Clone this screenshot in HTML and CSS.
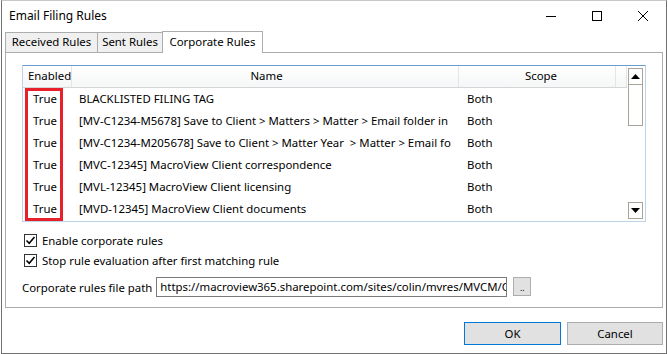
FILE: index.html
```html
<!DOCTYPE html>
<html lang="en">
<head>
    <meta charset="UTF-8">
    <title>Email Filing Rules</title>
    <link rel="stylesheet" href="styles.css">
</head>
<body>

    <div class="window">
        <!-- Title bar -->
        <div class="titlebar">
            <span class="title">Email Filing Rules</span>
            <div class="caption-buttons">
                <span class="cap-btn">
                    <svg width="10" height="10" viewBox="0 0 10 10"><path d="M0 5.5h10" stroke="#000" stroke-width="1"/></svg>
                </span>
                <span class="cap-btn">
                    <svg width="10" height="10" viewBox="0 0 10 10"><rect x="0.5" y="0.5" width="9" height="9" fill="none" stroke="#000" stroke-width="1"/></svg>
                </span>
                <span class="cap-btn">
                    <svg width="10" height="10" viewBox="0 0 10 10"><path d="M0 0L10 10M10 0L0 10" stroke="#000" stroke-width="1"/></svg>
                </span>
            </div>
        </div>

        <!-- Tabs -->
        <div class="tabs">
            <span class="tab tab-received">Received Rules</span>
            <span class="tab tab-sent">Sent Rules</span>
            <span class="tab active">Corporate Rules</span>
        </div>

        <div class="tab-panel">
            <div class="list">
                <div class="grid">
                    <div class="row header">
                        <span class="col-enabled">Enabled</span>
                        <span class="col-name">Name</span>
                        <span class="col-scope">Scope</span>
                        <span class="col-fill"></span>
                    </div>
                    <div class="row">
                        <span class="col-enabled">True</span>
                        <span class="col-name">BLACKLISTED FILING TAG</span>
                        <span class="col-scope">Both</span>
                    </div>
                    <div class="row">
                        <span class="col-enabled">True</span>
                        <span class="col-name">[MV-C1234-M5678] Save to Client &gt; Matters &gt; Matter &gt; Email folder in</span>
                        <span class="col-scope">Both</span>
                    </div>
                    <div class="row">
                        <span class="col-enabled">True</span>
                        <span class="col-name">[MV-C1234-M205678] Save to Client &gt; Matter Year &nbsp;&gt; Matter &gt; Email fo</span>
                        <span class="col-scope">Both</span>
                    </div>
                    <div class="row">
                        <span class="col-enabled">True</span>
                        <span class="col-name">[MVC-12345] MacroView Client correspondence</span>
                        <span class="col-scope">Both</span>
                    </div>
                    <div class="row">
                        <span class="col-enabled">True</span>
                        <span class="col-name">[MVL-12345] MacroView Client licensing</span>
                        <span class="col-scope">Both</span>
                    </div>
                    <div class="row">
                        <span class="col-enabled">True</span>
                        <span class="col-name">[MVD-12345] MacroView Client documents</span>
                        <span class="col-scope">Both</span>
                    </div>
                    <!-- highlight round the Enabled column -->
                    <div class="highlight"></div>
                </div>
                <div class="vscroll">
                    <span class="arrow">
                        <svg width="9" height="5" viewBox="0 0 9 5"><path d="M0 5L4.5 0L9 5Z" fill="#000"/></svg>
                    </span>
                    <span class="thumb"></span>
                    <span class="track"></span>
                    <span class="arrow">
                        <svg width="9" height="5" viewBox="0 0 9 5"><path d="M0 0L9 0L4.5 5Z" fill="#000"/></svg>
                    </span>
                </div>
            </div>

            <label class="check first">
                <span class="box"><svg width="11" height="11" viewBox="0 0 11 11"><path d="M1.5 5.5L4.2 8.2L9.5 2" fill="none" stroke="#000" stroke-width="1.6"/></svg></span>
                Enable corporate rules
            </label>
            <label class="check">
                <span class="box"><svg width="11" height="11" viewBox="0 0 11 11"><path d="M1.5 5.5L4.2 8.2L9.5 2" fill="none" stroke="#000" stroke-width="1.6"/></svg></span>
                Stop rule evaluation after first matching rule
            </label>

            <div class="path-row">
                <span class="path-label">Corporate rules file path</span>
                <span class="path-box">https://macroview365.sharepoint.com/sites/colin/mvres/MVCM/C</span>
                <span class="browse">..</span>
            </div>
        </div>

        <div class="buttons">
            <span class="btn default">OK</span>
            <span class="btn">Cancel</span>
        </div>
    </div>

</body>
</html>
```

FILE: styles.css
```css
body {
    margin: 0;
    font-family: "Noto Sans", "Open Sans", sans-serif;
    font-size: 11.4px;
    color: #000;
    background-color: #fff;
}

/* Dialog frame */
.window {
    box-sizing: border-box;
    width: 666px;
    height: 354px;
    margin-left: 1px;
    border: 1px solid #707070;
    border-top-color: #c8c8c8;
    background-color: #fff;
}

.titlebar {
    height: 30px;
    display: flex;
    align-items: center;
    justify-content: space-between;
}

.title {
    padding-left: 7px;
    padding-bottom: 1px;
    font-size: 12px;
}

.caption-buttons {
    display: flex;
    height: 100%;
}

.cap-btn {
    width: 46px;
    display: flex;
    align-items: center;
    justify-content: center;
}

.cap-btn svg {
    display: block;
}

/* Tabs */
.tabs {
    display: flex;
    align-items: flex-end;
    height: 21px;
    padding-left: 3px;
}

.tab {
    box-sizing: border-box;
    height: 20px;
    line-height: 18px;
    text-align: center;
    background-color: #f0f0f0;
    border: 1px solid #acacac;
    border-bottom: none;
    margin-right: -1px;
    white-space: nowrap;
}

.tab-received {
    width: 93px;
}

.tab-sent {
    width: 66px;
}

.tab.active {
    width: 101px;
    height: 22px;
    line-height: 20px;
    background-color: #fff;
    margin-bottom: -1px;
    position: relative;
}

.tab-panel {
    box-sizing: border-box;
    height: 256px;
    margin: 0 3px 0 3px;
    border: 1px solid #acacac;
    padding: 12px 0 0 16px;
}

/* List view */
.list {
    box-sizing: border-box;
    width: 624px;
    height: 157px;
    display: flex;
    border: 1px solid #bcd4e8;
    border-top-color: #6a9ed0;
}

.grid {
    flex: 1;
    position: relative;
}

.row {
    display: flex;
    height: 22px;
    line-height: 22px;
}

.row span {
    box-sizing: border-box;
    white-space: nowrap;
    overflow: hidden;
}

.row.header {
    height: 21px;
    line-height: 20px;
    background: linear-gradient(#fff, #f5f6f7);
    border-bottom: 1px solid #d5d5d5;
}

.row.header span {
    text-align: center;
    border-right: 1px solid #e5e5e5;
}

.row.header .col-enabled {
    padding-left: 5px;
    text-align: left;
}

.col-enabled {
    width: 49px;
    padding-left: 10px;
}

.col-name {
    width: 387px;
    padding-left: 7px;
    padding-right: 4px;
}

.col-scope {
    width: 157px;
    padding-left: 8px;
}

.col-fill {
    flex: 1;
}

.highlight {
    position: absolute;
    left: 2px;
    top: 22px;
    width: 38px;
    height: 133px;
    box-sizing: border-box;
    border: 3px solid #e8202a;
}

.vscroll {
    width: 15px;
    margin: 2px 2px 2px 1px;
    display: flex;
    flex-direction: column;
}

.vscroll .arrow {
    box-sizing: border-box;
    height: 17px;
    border: 1px solid #a8a497;
    display: flex;
    align-items: center;
    justify-content: center;
    background-color: #fff;
}

.vscroll .thumb {
    box-sizing: border-box;
    height: 42px;
    margin-top: -1px;
    border: 1px solid #a8a497;
    background-color: #fff;
}

.vscroll .track {
    flex: 1;
}

/* Checkboxes */
.check {
    display: flex;
    align-items: center;
    gap: 5px;
    height: 20px;
    margin-left: 2px;
}

.check.first {
    margin-top: 8px;
}

.box {
    box-sizing: border-box;
    width: 13px;
    height: 13px;
    border: 1px solid #333;
    display: flex;
    align-items: center;
    justify-content: center;
}

.box svg {
    display: block;
}

/* File path row */
.path-row {
    display: flex;
    align-items: center;
    margin-top: 7px;
}

.path-label {
    white-space: nowrap;
    margin-right: 4px;
}

.path-box {
    box-sizing: border-box;
    width: 351px;
    height: 20px;
    line-height: 18px;
    padding-left: 3px;
    border: 1px solid #7a7a7a;
    white-space: nowrap;
    overflow: hidden;
}

.browse {
    box-sizing: border-box;
    width: 18px;
    height: 19px;
    margin-left: 6px;
    margin-top: -1px;
    background-color: #e1e1e1;
    border: 1px solid #adadad;
    font-size: 9px;
    text-align: center;
    line-height: 20px;
}

/* Dialog buttons */
.buttons {
    display: flex;
    justify-content: flex-end;
    gap: 6px;
    margin-top: 14px;
    padding-right: 3px;
}

.btn {
    box-sizing: border-box;
    width: 96px;
    height: 23px;
    line-height: 21px;
    text-align: center;
    background-color: #e1e1e1;
    border: 1px solid #adadad;
}

.btn.default {
    width: 97px;
    border-color: #0078d7;
}
```
